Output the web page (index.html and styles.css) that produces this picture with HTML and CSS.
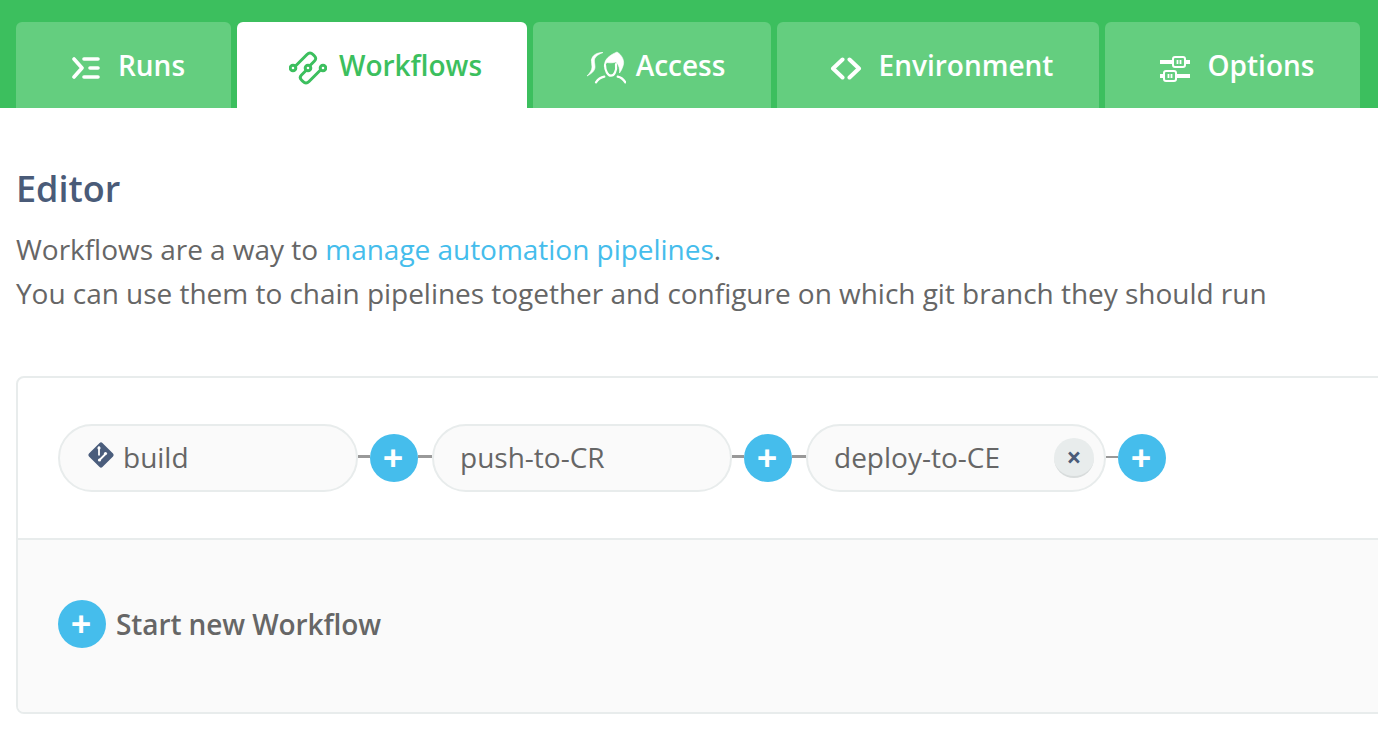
FILE: index.html
```html
<!DOCTYPE html>
<html lang="en">
<head>
    <meta charset="UTF-8">
    <meta name="viewport" content="width=device-width, initial-scale=1.0">
    <title>Workflows</title>
    <link rel="stylesheet" href="styles.css">
</head>
<body>
    <nav class="tabs">
        <a class="tab tab-runs">
            <svg class="tab-icon" width="28" height="22" viewBox="0 0 28 22" fill="none" stroke="currentColor" stroke-width="3.6" stroke-linecap="round" stroke-linejoin="round"><path d="M2 2l8 9-8 9"/><path d="M12 2h14M18 11h8M12 20h14"/></svg>
            <span>Runs</span>
        </a>
        <a class="tab tab-workflows active">
            <svg class="tab-icon" width="38" height="34" viewBox="0 0 38 34" fill="none" stroke="currentColor" stroke-width="3" stroke-linecap="round" stroke-linejoin="round"><circle cx="4" cy="17" r="2.800"/><circle cx="19" cy="17" r="2.800"/><circle cx="34" cy="17" r="2.800"/><path d="M6.500 15L18 3.500c2-2 4-2 6 0l1.500 1.500c1.600 1.600 1.600 3.400 0 5L21 14.500"/><path d="M31.500 19L20 30.500c-2 2-4 2-6 0L12.500 29c-1.600-1.600-1.600-3.400 0-5L17 19.500"/></svg>
            <span>Workflows</span>
        </a>
        <a class="tab tab-access">
            <svg class="tab-icon" width="40" height="34" viewBox="0 0 40 34" fill="none" stroke="currentColor" stroke-width="2.200" stroke-linecap="round" stroke-linejoin="round"><path class="hair" d="M5.500 9C6 4 11 1.500 17 1.500 13 3 9.500 5 8.500 8 8 10.500 9 13 9 16c0 4-4 7-8 9 3-3 5-6 5-9 0-2.500-.8-4.500-.5-7z"/><path class="hair" d="M18.500 15C18 8 24 4 31 1c5 3 8 9 6 14-1 3-2 5-3.500 7 .5-4-.5-8-3.500-11-3 1-7 1-9 .5-1 1-1.500 2-2.500 3.500z"/><path d="M19 14c0 6 3 10.700 6 10.700S31 20 30 13"/><path d="M10 31.300c2-3 5-5 8.300-5.600M31.700 25.700c3.300.6 5.600 2.600 7.600 5.600"/></svg>
            <span>Access</span>
        </a>
        <a class="tab tab-env">
            <svg class="tab-icon" width="32" height="23" viewBox="0 0 32 23" fill="none" stroke="currentColor" stroke-width="4" stroke-linecap="round" stroke-linejoin="round"><path d="M12.500 2.500L3 11.500l9.500 9"/><path d="M19.500 2.500l9.500 9-9.500 9"/></svg>
            <span>Environment</span>
        </a>
        <a class="tab tab-options">
            <svg class="tab-icon" width="30" height="26" viewBox="0 0 30 26" fill="none" stroke="currentColor"><path d="M0 6h13M25 6h5M0 20h4M16 20h14" stroke-width="4"/><rect x="13" y="1" width="12" height="10" rx="2" stroke-width="2"/><rect x="4" y="15" width="12" height="10" rx="2" stroke-width="2"/><path d="M17.500 4v4M20.500 4v4M8.500 18v4M11.500 18v4" stroke-width="1.800"/></svg>
            <span>Options</span>
        </a>
    </nav>

    <main class="content">
        <h2>Editor</h2>
        <p class="intro">
            Workflows are a way to <a class="link">manage automation pipelines</a>.<br>
            You can use them to chain pipelines together and configure on which git branch they should run
        </p>

        <section class="panel">
            <div class="workflow-row">
                <div class="pill">
                    <svg class="git-icon" width="28" height="28" viewBox="0 0 28 28"><rect x="4.500" y="4.500" width="19" height="19" rx="2" transform="rotate(45 14 14)" fill="#4a5d7c"/><path d="M12 5.500v9M12.500 19l6-6" fill="none" stroke="#fff" stroke-width="1.800"/><circle cx="12" cy="7" r="1.600" fill="#fff"/><circle cx="18.500" cy="12.500" r="1.600" fill="#fff"/><circle cx="12.500" cy="19" r="1.600" fill="#fff"/></svg>
                    <span>build</span>
                </div>
                <span class="line line-left"></span>
                <button class="plus">+</button>
                <span class="line line-right"></span>
                <div class="pill">push-to-CR</div>
                <span class="line line-left"></span>
                <button class="plus">+</button>
                <span class="line line-right"></span>
                <div class="pill pill-remove">
                    <span>deploy-to-CE</span>
                    <button class="remove">&times;</button>
                </div>
                <span class="line line-left thin"></span>
                <button class="plus">+</button>
            </div>
            <div class="new-row">
                <button class="plus">+</button>
                <span class="new-label">Start new Workflow</span>
            </div>
        </section>
    </main>
</body>
</html>
```

FILE: styles.css
```css
html, body { margin: 0; padding: 0; height: 748px; overflow: hidden; background: white; }
body { font-family: "Open Sans", Arial, sans-serif; color: #666; }

.tabs { display: flex; gap: 6px; height: 86px; padding: 22px 0 0 16px; background-color: #3cbf5e; }
.tab { display: flex; align-items: center; justify-content: center; height: 86px; padding-left: 7px; background-color: #64ce7f; color: white; font-size: 28px; font-weight: 600; line-height: 1; border-radius: 6px 6px 0 0; box-sizing: border-box; }
.tab.active { background-color: white; color: #3cbf5e; }
.tab-runs { width: 215px; gap: 18px; padding-left: 10px; }
.tab-workflows { width: 290px; gap: 12px; }
.tab-access { width: 238px; gap: 10px; }
.tab-env { width: 322px; gap: 17px; }
.tab-options { width: 255px; gap: 18px; padding-left: 9px; }
.tab-icon { flex-shrink: 0; margin-top: 5px; }
.tab-env .tab-icon { margin-top: 7px; }
.tab-options .tab-icon { margin-top: 8px; }
.hair { fill: currentColor; stroke-width: 0.6; }

.content { padding: 0 0 0 16px; }
h2 { margin: 57px 0 0 0; font-size: 36px; line-height: 48px; font-weight: 600; color: #4a5b78; }
.intro { margin: 14px 0 0 0; font-size: 28px; letter-spacing: -0.03px; line-height: 44px; color: #666; }
.link { color: #45bdec; }

.panel { width: 1400px; height: 338px; margin-top: 61px; border: 2px solid #e8ecec; border-radius: 8px; box-sizing: border-box; background: white; overflow: hidden; }
.workflow-row { display: flex; align-items: center; height: 162px; padding-left: 40px; box-sizing: border-box; border-bottom: 2px solid #e8ecec; }
.pill { display: flex; align-items: center; gap: 8px; width: 300px; height: 68px; padding: 0 0 2px 26px; box-sizing: border-box; background: #fafafa; border: 2px solid #e8ecec; border-radius: 34px; font-size: 28px; color: #666; }
.pill-remove { justify-content: space-between; padding-right: 10px; }
.pill-remove .remove { margin-top: 2px; }
.git-icon { margin-top: -4px; margin-left: 1px; }

.plus { display: flex; align-items: center; justify-content: center; width: 48px; height: 48px; padding: 0 2px 0 0; border: none; border-radius: 50%; background-color: #45bdec; color: white; font-family: "Open Sans", Arial, sans-serif; font-size: 36px; font-weight: 700; line-height: 1; flex-shrink: 0; }
.line { height: 3px; margin-top: -3px; background: #999; flex-shrink: 0; }
.line-left { width: 12px; }
.line-right { width: 14px; }
.line.thin { height: 2px; }
.remove { width: 40px; height: 40px; padding: 0; border: none; border-bottom: 2px solid #d8dcdc; border-radius: 50%; background: #e8ecec; color: #4a5b78; font-family: "Open Sans", Arial, sans-serif; font-size: 26px; font-weight: 700; line-height: 1; }

.new-row { display: flex; align-items: flex-start; gap: 10px; height: 172px; padding: 60px 0 0 40px; box-sizing: border-box; background: #fafafa; }
.new-label { font-size: 28px; font-weight: 600; letter-spacing: -0.1px; line-height: 48px; color: #666; }
```
